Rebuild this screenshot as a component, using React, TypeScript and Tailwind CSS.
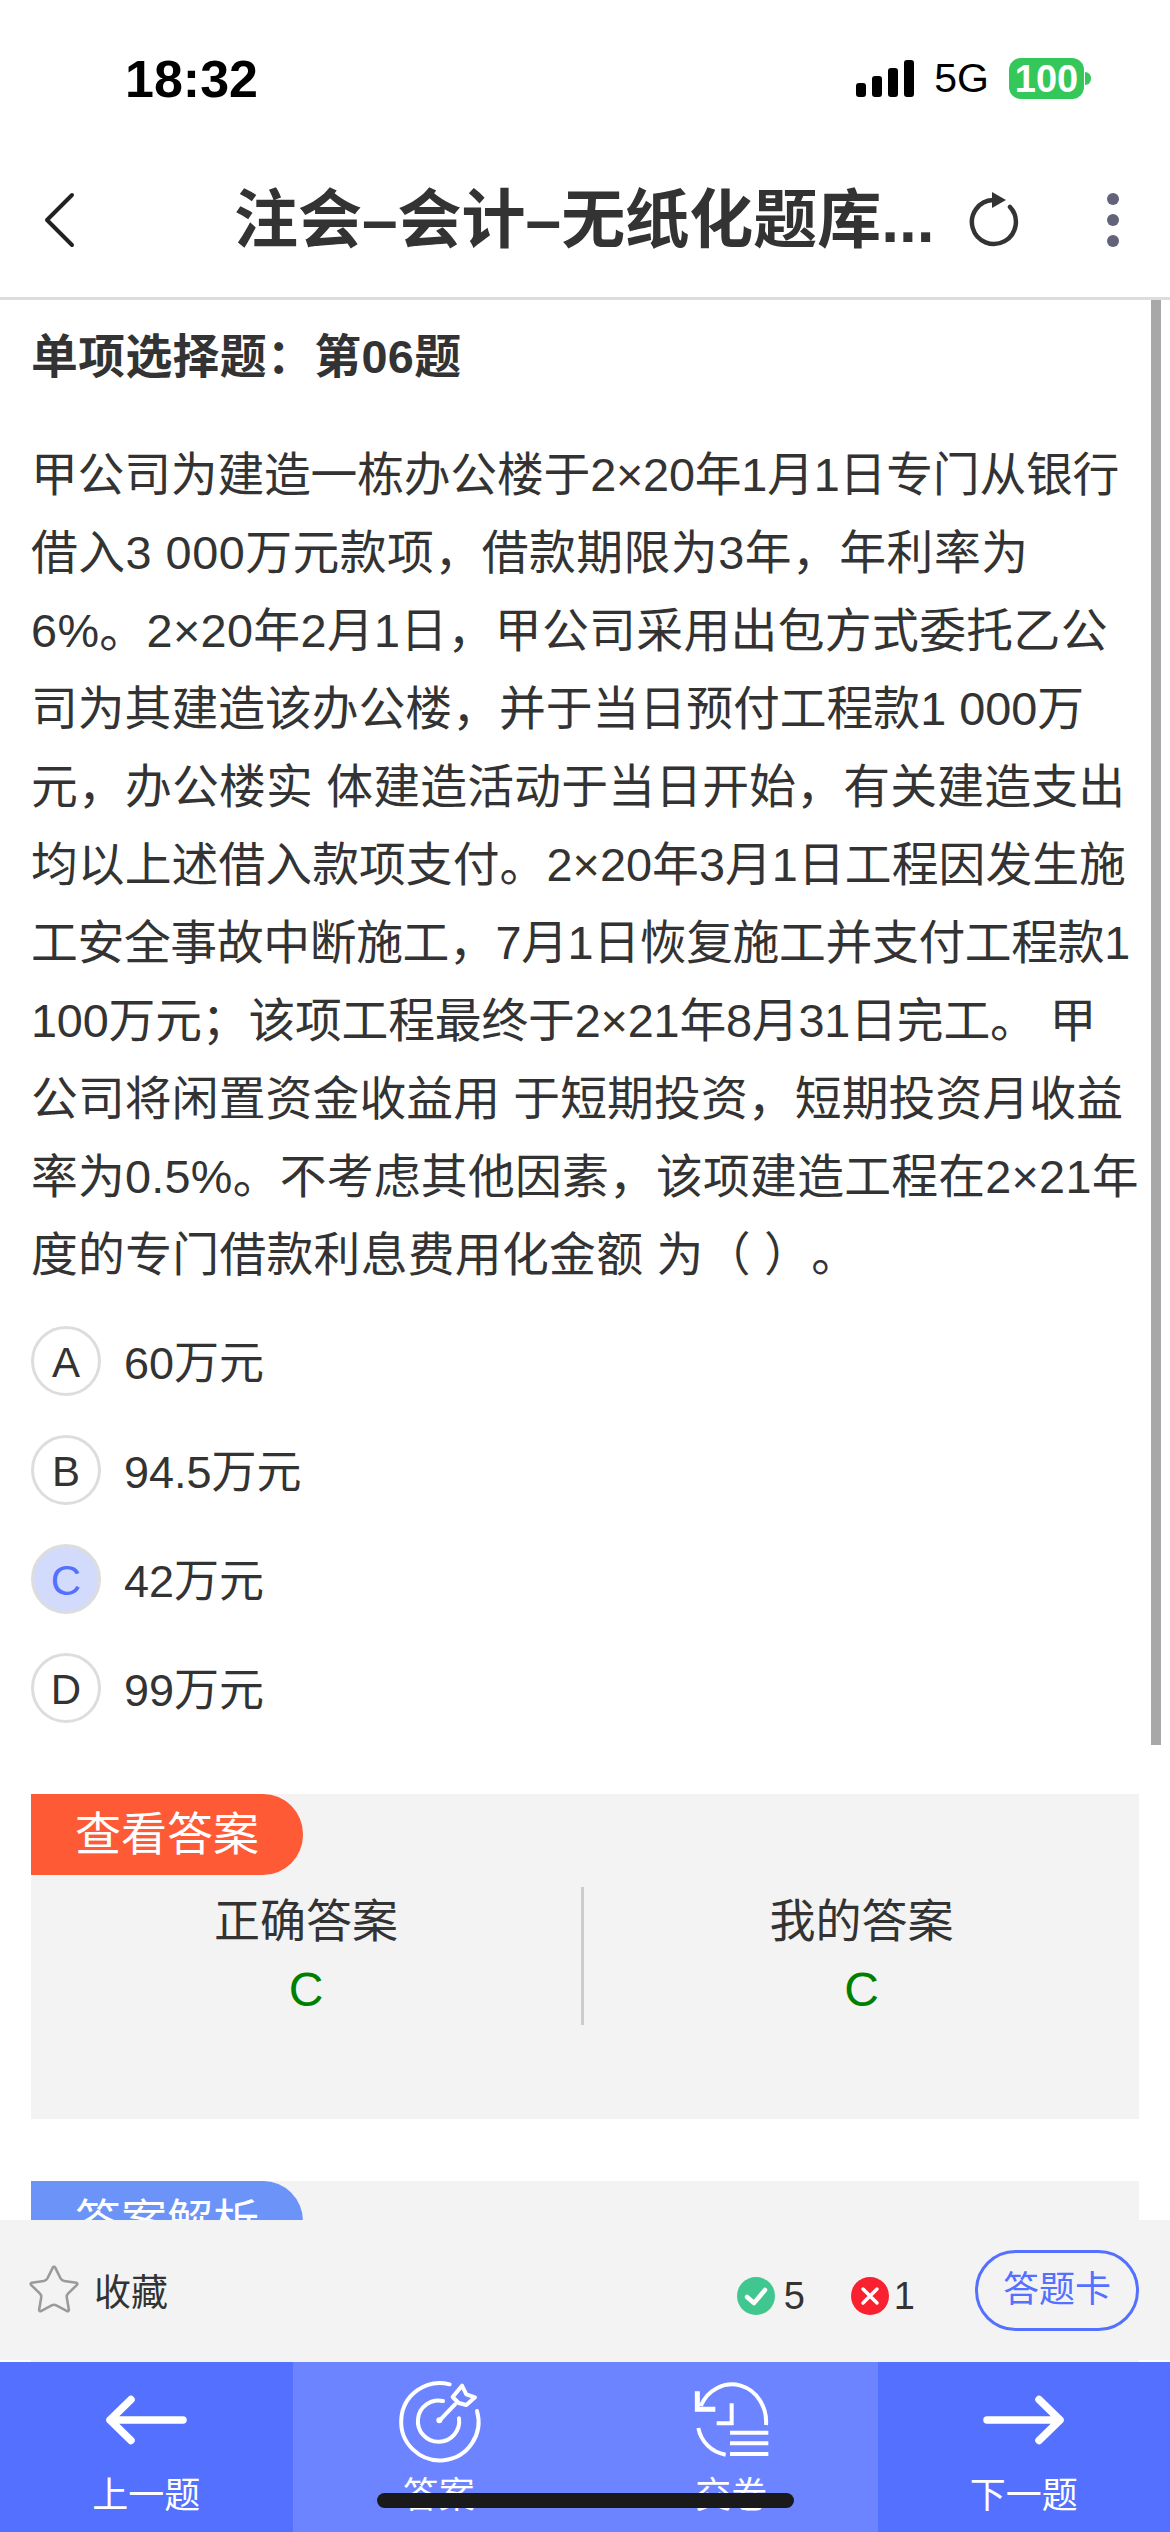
import { Star } from "lucide-react";

const lines = [
  { t: "甲公司为建造一栋办公楼于2×20年1月1日专门从银行", c: "tracking-[-0.2px]" },
  { t: "借入3 000万元款项，借款期限为3年，年利率为", c: "tracking-[0.5px]" },
  { t: "6%。2×20年2月1日，甲公司采用出包方式委托乙公", c: "tracking-[0.36px]" },
  { t: "司为其建造该办公楼，并于当日预付工程款1 000万", c: "" },
  { t: "元，办公楼实 体建造活动于当日开始，有关建造支出", c: "tracking-[0.2px]" },
  { t: "均以上述借入款项支付。2×20年3月1日工程因发生施", c: "tracking-[0.06px]" },
  { t: "工安全事故中断施工，7月1日恢复施工并支付工程款1", c: "tracking-[-0.35px]" },
  { t: "100万元；该项工程最终于2×21年8月31日完工。 甲", c: "tracking-[-0.18px]" },
  { t: "公司将闲置资金收益用 于短期投资，短期投资月收益", c: "tracking-[0.12px]" },
  { t: "率为0.5%。不考虑其他因素，该项建造工程在2×21年", c: "tracking-[0.24px]" },
  { t: "度的专门借款利息费用化金额 为（ ）。", c: "tracking-[0.3px]" },
];

const options = [
  { key: "A", text: "60万元" },
  { key: "B", text: "94.5万元" },
  { key: "C", text: "42万元", picked: true },
  { key: "D", text: "99万元" },
];

function StatusBar() {
  return (
    <div className="flex h-[156px] items-center justify-between pl-[125px] pr-[79px] pt-[1px] text-black">
      <span className="text-[52px] font-semibold leading-none">18:32</span>
      <div className="flex items-center">
        <div className="flex h-[37px] items-end gap-[6px]">
          <div className="h-[14px] w-[10px] rounded-[3px] bg-black" />
          <div className="h-[21px] w-[10px] rounded-[3px] bg-black" />
          <div className="h-[29px] w-[10px] rounded-[3px] bg-black" />
          <div className="h-[37px] w-[10px] rounded-[3px] bg-black" />
        </div>
        <span className="ml-[20px] text-[41px] leading-none">5G</span>
        <div className="ml-[20px] flex h-[41px] w-[75px] items-center justify-center rounded-[12px] bg-[#34c759] text-[38px] font-bold leading-none text-white">
          100
        </div>
        <div className="ml-[1px] h-[13px] w-[6px] rounded-r-full bg-[#34c759]" />
      </div>
    </div>
  );
}

function NavBar() {
  return (
    <div className="flex h-[144px] items-center border-b-[3px] border-[#dddddd] pb-[14px]">
      <svg className="ml-[43px] h-[56px] w-[32px]" viewBox="0 0 32 56" fill="none">
        <path d="M29 3 L4 28 L29 53" stroke="#222222" strokeWidth="4" strokeLinecap="round" strokeLinejoin="round" />
      </svg>
      <span className="ml-[159px] whitespace-nowrap text-[64px] font-bold leading-none text-[#333333]">
        注会–会计–无纸化题库...
      </span>
      <svg className="ml-[34px] h-[56px] w-[50px]" viewBox="0 0 50 56" fill="none">
        <path d="M41 15 A22 22 0 1 1 24 8" stroke="#333333" strokeWidth="4.5" strokeLinecap="round" />
        <path d="M23 0 L37 8 L23 16 Z" fill="#333333" />
      </svg>
      <div className="ml-[88px] flex flex-col gap-[9px]">
        <div className="h-[12px] w-[12px] rounded-full bg-[#62627a]" />
        <div className="h-[12px] w-[12px] rounded-full bg-[#62627a]" />
        <div className="h-[12px] w-[12px] rounded-full bg-[#62627a]" />
      </div>
    </div>
  );
}

function TargetIcon() {
  return (
    <svg className="ml-[4px] h-[110px] w-[120px]" viewBox="0 0 360 330" fill="none" stroke="white" strokeWidth="12" strokeLinecap="round" strokeLinejoin="round">
      <path d="M206 58 A116 116 0 1 0 288 138" />
      <path d="M186 108 A62 62 0 1 0 234 160" />
      <path d="M176 166 L222 118" />
      <circle cx="175" cy="166" r="9" fill="white" stroke="none" />
      <path d="M243 62 L256 88 L282 97 L256 120 L233 114 L215 96 Z" />
    </svg>
  );
}

function ReturnIcon() {
  return (
    <svg className="ml-[8px] h-[100px] w-[110px]" viewBox="0 0 330 300" fill="none" stroke="white" strokeWidth="12">
      <path d="M258 165 A103 112 0 0 0 62 108" />
      <path d="M52 64 L52 118 L106 118" strokeWidth="15" />
      <path d="M155 100 L155 160 L110 160" />
      <path d="M55 174 A100 100 0 0 0 137 254" />
      <path d="M150 188 H265 M150 220 H265 M150 252 H265" />
    </svg>
  );
}

function Arrow({ flip }: { flip?: boolean }) {
  return (
    <svg className={flip ? "h-[56px] w-[90px] -scale-x-100" : "h-[56px] w-[90px]"} viewBox="0 0 90 56" fill="none">
      <path d="M30 7.5 L9 28 L30 48.5 M9 28 H82" stroke="white" strokeWidth="7.5" strokeLinecap="round" strokeLinejoin="round" />
    </svg>
  );
}

function Tab({ label, icon, light }: { label: string; icon: React.ReactNode; light?: boolean }) {
  return (
    <div className={light ? "flex flex-col items-center bg-[#6c84ff] pt-[4px]" : "flex flex-col items-center bg-[#5470ff] pt-[4px]"}>
      <div className="flex h-[108px] items-center justify-center">{icon}</div>
      <span className="text-[36px] leading-[44px] text-white">{label}</span>
    </div>
  );
}

export default function App() {
  return (
    <div className="relative h-[2532px] w-[1170px] overflow-hidden bg-white text-[#333333] [font-family:'Liberation_Sans','Noto_Sans_CJK_SC',sans-serif] [text-spacing-trim:space-all]">
      <StatusBar />
      <NavBar />

      <div className="px-[31px] pt-[18px]">
        <h1 className="text-[46.8px] font-bold leading-[78px] tracking-[0.4px]">单项选择题：第06题</h1>

        <div className="mt-[40px] text-[46.8px] leading-[78px]">
          {lines.map((l) => (
            <div key={l.t} className={"whitespace-pre " + l.c}>{l.t}</div>
          ))}
        </div>

        <div className="mt-[32px] flex flex-col gap-[39px]">
          {options.map((o) => (
            <div key={o.key} className="flex h-[70px] items-center">
              <div
                className={
                  o.picked
                    ? "flex h-[70px] w-[70px] items-center justify-center rounded-full border-[3px] border-[#dddddd] bg-[#d3dbfd] pt-[3px] text-[42px] text-[#5470ff]"
                    : "flex h-[70px] w-[70px] items-center justify-center rounded-full border-[3px] border-[#dddddd] pt-[3px] text-[42px]"
                }
              >
                {o.key}
              </div>
              <span className="ml-[23px] pt-[4px] text-[45px] leading-none">{o.text}</span>
            </div>
          ))}
        </div>

        <div className="mt-[71px] h-[325px] bg-[#f3f3f3]">
          <div className="flex h-[81px] w-[272px] items-center justify-center rounded-r-[40px] bg-[#ff5a36] text-[46px] text-white">
            查看答案
          </div>
          <div className="mt-[12px] flex h-[138px]">
            <div className="w-[553px] border-r-[3px] border-[#cccccc] text-center">
              <div className="text-[46px] leading-[68px]">正确答案</div>
              <div className="text-[48px] leading-[70px] text-[#008000]">C</div>
            </div>
            <div className="flex-1 text-center">
              <div className="text-[46px] leading-[68px]">我的答案</div>
              <div className="text-[48px] leading-[70px] text-[#008000]">C</div>
            </div>
          </div>
        </div>

        <div className="mt-[62px] h-[400px] bg-[#f3f3f3]">
          <div className="flex h-[81px] w-[272px] items-center justify-center rounded-r-[40px] bg-[#6b93f8] text-[46px] text-white">
            答案解析
          </div>
        </div>
      </div>

      {/* page scrollbar */}
      <div className="absolute right-[9px] top-[300px] h-[1445px] w-[10px] bg-[#a8a8a8]" />

      <div className="absolute bottom-[172px] left-0 flex h-[140px] w-full items-center bg-[#f3f3f3] pl-[26px] pr-[31px]">
        <Star className="h-[56px] w-[56px] text-[#9a9a9a]" strokeWidth={1.1} />
        <span className="ml-[12px] pt-[6px] text-[37px] leading-none">收藏</span>
        <div className="ml-auto flex items-center">
          <div className="mt-[12px] flex items-center">
            <svg className="h-[38px] w-[38px]" viewBox="0 0 38 38">
              <circle cx="19" cy="19" r="19" fill="#40c78f" />
              <path d="M10 20 L17 26 L28 13" fill="none" stroke="white" strokeWidth="4.5" strokeLinecap="round" strokeLinejoin="round" />
            </svg>
            <span className="ml-[9px] text-[38px] leading-none">5</span>
            <svg className="ml-[46px] h-[38px] w-[38px]" viewBox="0 0 38 38">
              <circle cx="19" cy="19" r="19" fill="#f9202f" />
              <path d="M12 12 L26 26 M26 12 L12 26" fill="none" stroke="white" strokeWidth="3.5" strokeLinecap="round" />
            </svg>
            <span className="ml-[5px] text-[38px] leading-none">1</span>
          </div>
          <button className="ml-[60px] flex h-[81px] w-[164px] items-center justify-center rounded-full border-[3px] border-[#5470ff] text-[36px] text-[#5470ff]">
            答题卡
          </button>
        </div>
      </div>

      <div className="absolute bottom-0 left-0 grid h-[170px] w-full grid-cols-4">
        <Tab label="上一题" icon={<Arrow />} />
        <Tab label="答案" icon={<TargetIcon />} light />
        <Tab label="交卷" icon={<ReturnIcon />} light />
        <Tab label="下一题" icon={<Arrow flip />} />
      </div>

      {/* home indicator */}
      <div className="absolute bottom-[24px] left-[377px] h-[15px] w-[417px] rounded-full bg-[#1a1a1a]" />
    </div>
  );
}
